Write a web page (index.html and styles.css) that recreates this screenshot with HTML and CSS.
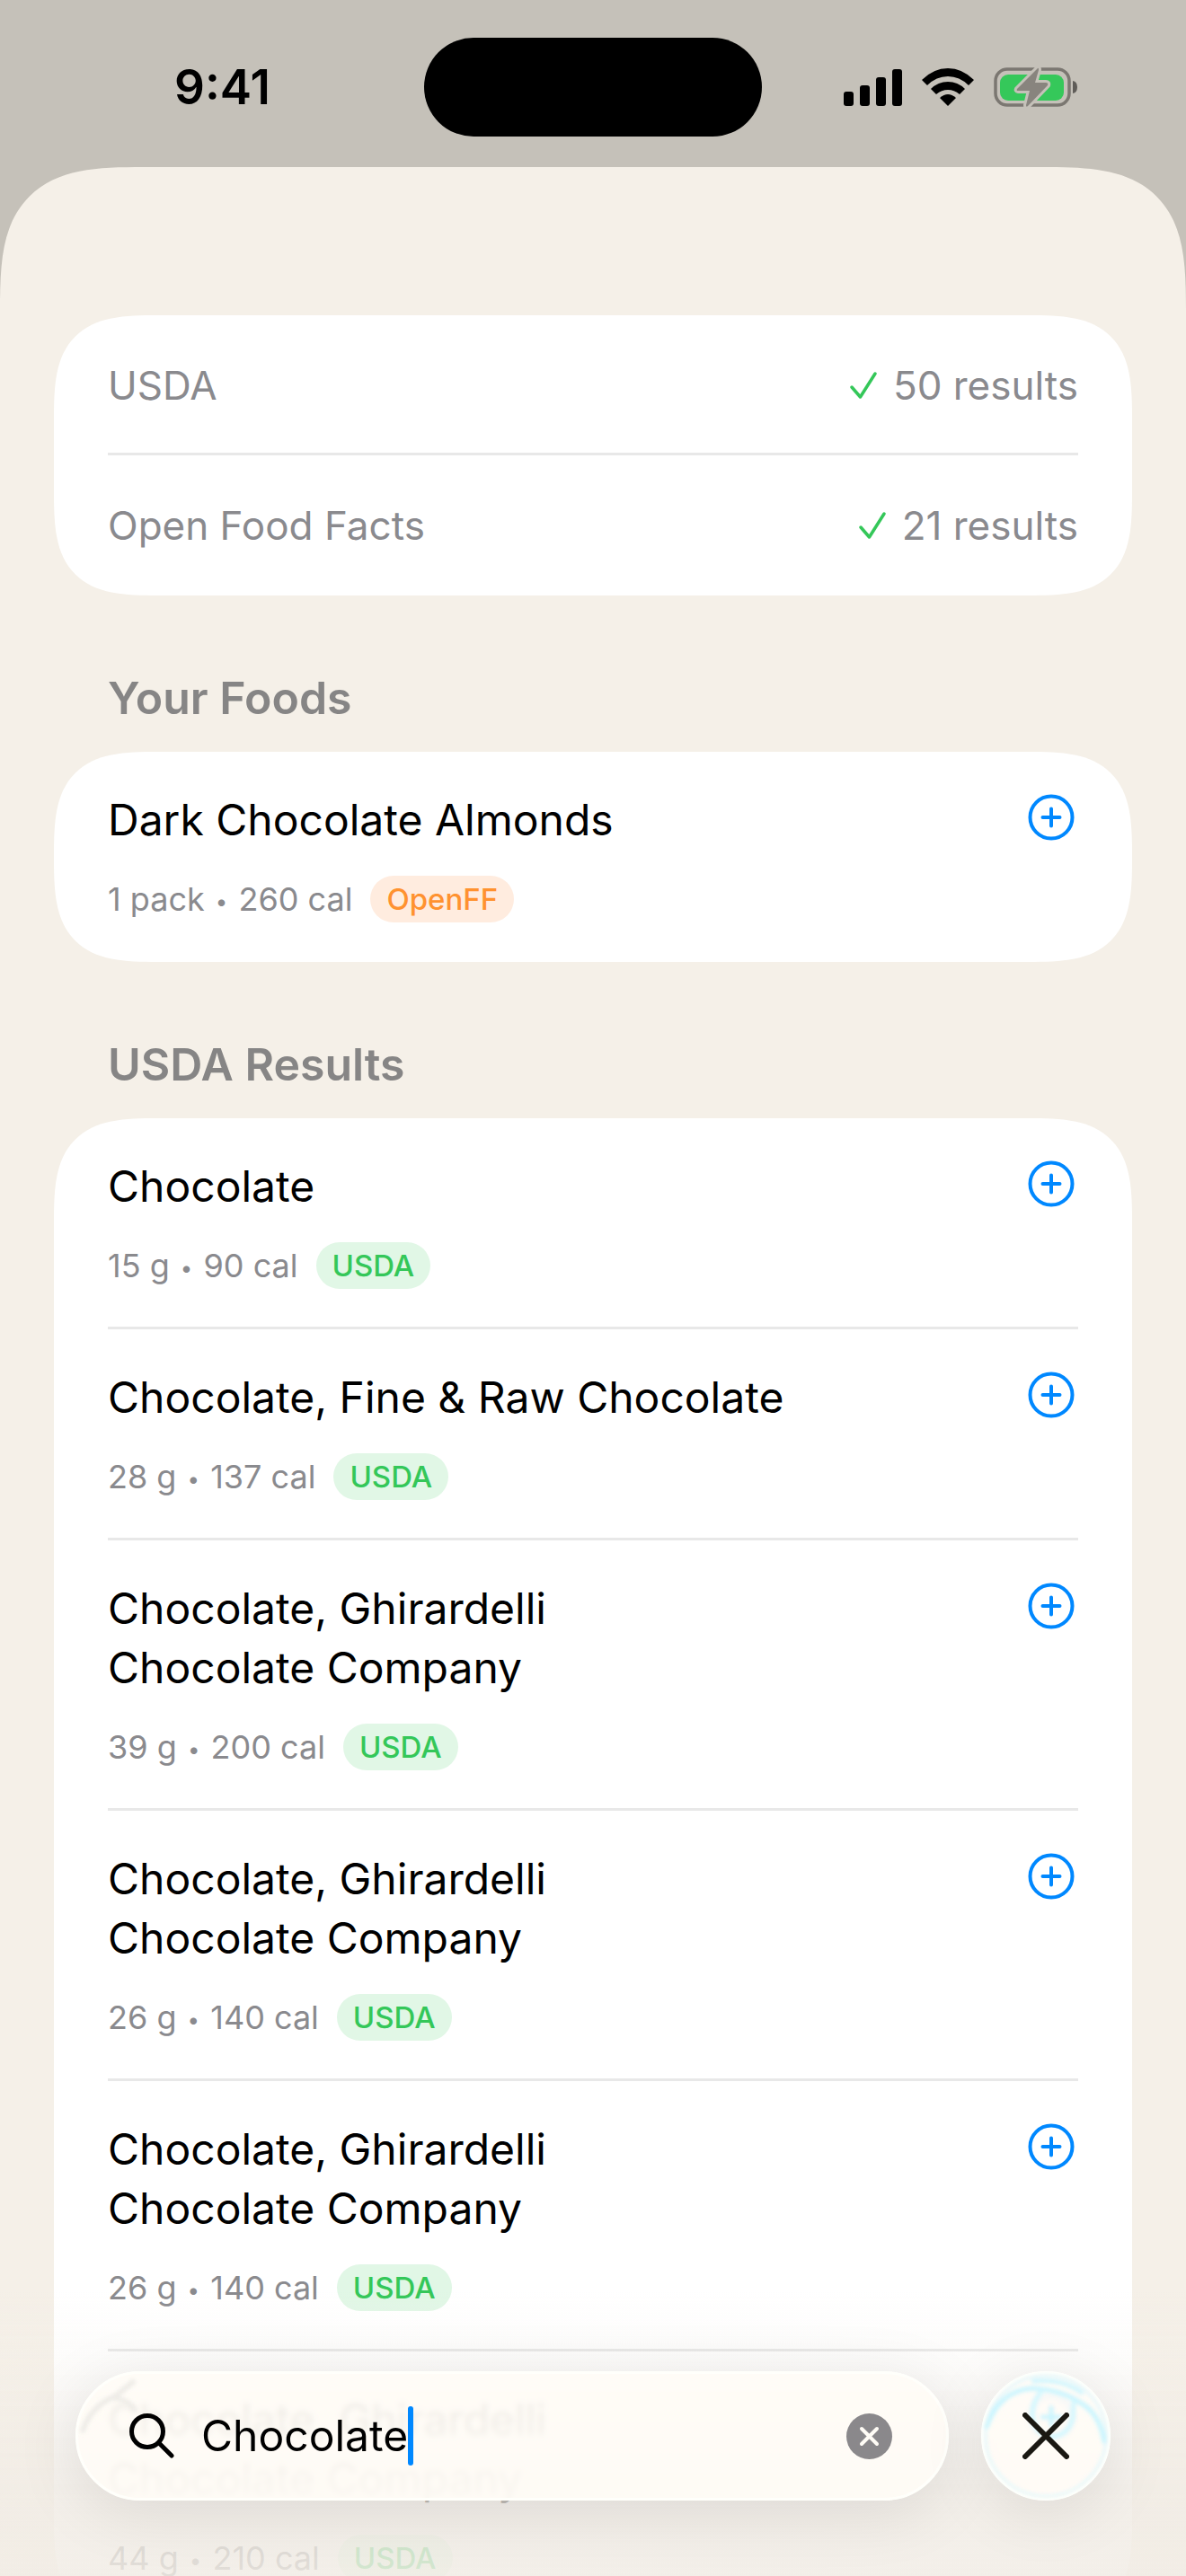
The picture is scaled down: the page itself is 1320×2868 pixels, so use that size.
FILE: index.html
```html
<!DOCTYPE html>
<html lang="en">
<head>
    <meta charset="UTF-8">
    <meta name="viewport" content="width=device-width, initial-scale=1.0">
    <title>Food search</title>
    <link rel="stylesheet" href="styles.css">
</head>
<body>
    <svg width="0" height="0" class="defs" aria-hidden="true">
        <symbol id="plus" viewBox="0 0 60 60">
            <circle cx="30" cy="30" r="23.5" fill="none" stroke="currentColor" stroke-width="4"/>
            <path d="M30 20.500V39.500M20.500 30H39.500" stroke="currentColor" stroke-width="4" stroke-linecap="round"/>
        </symbol>
        <symbol id="check" viewBox="0 0 30 30">
            <path d="M2 17L11.500 28L28 2" fill="none" stroke="currentColor" stroke-width="3.500" stroke-linecap="round" stroke-linejoin="round"/>
        </symbol>
    </svg>

    <header class="status">
        <span class="time">9:41</span>
        <span class="island"></span>
        <div class="signals">
            <svg width="65" height="42" viewBox="0 0 65 42">
                <rect x="0" y="26" width="11" height="16" rx="3"/>
                <rect x="18" y="19" width="11" height="23" rx="3"/>
                <rect x="36" y="10" width="11" height="32" rx="3"/>
                <rect x="54" y="1" width="11" height="41" rx="3"/>
            </svg>
            <svg width="58" height="42" viewBox="0 0 58 42">
                <path d="M29 42L20 33Q29 25 38 33Z"/>
                <path d="M29 0Q45 0 58 13L52 19Q42 9 29 9Q16 9 6 19L0 13Q13 0 29 0Z"/>
                <path d="M29 15Q40 15 48 23L42 29Q36 24 29 24Q22 24 16 29L10 23Q18 15 29 15Z"/>
            </svg>
            <svg width="94" height="46" viewBox="0 0 94 46">
                <rect x="2" y="3" width="82" height="40" rx="13" fill="none" stroke="#7b7771" stroke-width="3.500"/>
                <path d="M88 16Q93 17 93 23Q93 29 88 30Z" fill="#5f5c58"/>
                <rect x="7" y="9" width="71" height="29" rx="9" fill="#35c85a"/>
                <path d="M49 2L26 25Q25 27 27 27L40 27L36 43Q36 46 38 44L60 21Q61 18 58 18L46 18L50 4Q50 1 49 2Z" fill="#88847e" stroke="#c5c1b9" stroke-width="6" paint-order="stroke" stroke-linejoin="round"/>
            </svg>
        </div>
    </header>

    <main class="sheet">
        <ul class="card">
            <li class="source">USDA <span class="count"><svg class="check"><use href="#check"/></svg>50 results</span></li>
            <li class="source">Open Food Facts <span class="count"><svg class="check"><use href="#check"/></svg>21 results</span></li>
        </ul>

        <h2 class="heading">Your Foods</h2>
        <ul class="card">
            <li class="food">
                <div class="info">
                    <div class="name">Dark Chocolate Almonds</div>
                    <div class="meta"><span>1 pack <i class="dot">•</i> 260 cal</span> <span class="badge openff">OpenFF</span></div>
                </div>
                <button class="add" aria-label="Add"><svg><use href="#plus"/></svg></button>
            </li>
        </ul>

        <h2 class="heading">USDA Results</h2>
        <ul class="card">
            <li class="food">
                <div class="info">
                    <div class="name">Chocolate</div>
                    <div class="meta"><span>15 g <i class="dot">•</i> 90 cal</span> <span class="badge">USDA</span></div>
                </div>
                <button class="add" aria-label="Add"><svg><use href="#plus"/></svg></button>
            </li>
            <li class="food">
                <div class="info">
                    <div class="name">Chocolate, Fine &amp; Raw Chocolate</div>
                    <div class="meta"><span>28 g <i class="dot">•</i> 137 cal</span> <span class="badge">USDA</span></div>
                </div>
                <button class="add" aria-label="Add"><svg><use href="#plus"/></svg></button>
            </li>
            <li class="food">
                <div class="info">
                    <div class="name">Chocolate, Ghirardelli<br>Chocolate Company</div>
                    <div class="meta"><span>39 g <i class="dot">•</i> 200 cal</span> <span class="badge">USDA</span></div>
                </div>
                <button class="add" aria-label="Add"><svg><use href="#plus"/></svg></button>
            </li>
            <li class="food">
                <div class="info">
                    <div class="name">Chocolate, Ghirardelli<br>Chocolate Company</div>
                    <div class="meta"><span>26 g <i class="dot">•</i> 140 cal</span> <span class="badge">USDA</span></div>
                </div>
                <button class="add" aria-label="Add"><svg><use href="#plus"/></svg></button>
            </li>
            <li class="food">
                <div class="info">
                    <div class="name">Chocolate, Ghirardelli<br>Chocolate Company</div>
                    <div class="meta"><span>26 g <i class="dot">•</i> 140 cal</span> <span class="badge">USDA</span></div>
                </div>
                <button class="add" aria-label="Add"><svg><use href="#plus"/></svg></button>
            </li>
            <li class="food">
                <div class="info">
                    <div class="name">Chocolate, Ghirardelli<br>Chocolate Company</div>
                    <div class="meta"><span>44 g <i class="dot">•</i> 210 cal</span> <span class="badge">USDA</span></div>
                </div>
                <button class="add" aria-label="Add"><svg><use href="#plus"/></svg></button>
            </li>
        </ul>
    </main>

    <form class="bottom">
        <div class="search">
            <svg class="shine" viewBox="0 0 144 144" aria-hidden="true">
                <path d="M8 66Q18 38 44 28Q54 20 64 12" stroke="#eeece7" stroke-width="6"/>
                <path d="M42 30Q56 30 66 42" stroke="#eeece7" stroke-width="5"/>
            </svg>
            <svg class="glass" viewBox="0 0 50 50"><circle cx="20" cy="20" r="17.500"/><path d="M33 33L47 47"/></svg>
            <input class="field" type="text" value="Chocolate" aria-label="Search foods">
            <span class="caret"></span>
            <button class="clear" type="button" aria-label="Clear text">
                <svg viewBox="0 0 51 51"><path d="M17 17L34 34M34 17L17 34"/></svg>
            </button>
        </div>
        <button class="close" type="button" aria-label="Close search">
            <svg class="shine" viewBox="0 0 144 144" aria-hidden="true">
                <circle cx="72" cy="72" r="67" stroke="#d6f5ff" stroke-width="2"/>
                <path d="M6 62Q20 22 56 19Q88 20 112 36Q132 48 137 78" stroke="#c8f5ff" stroke-width="5"/>
                <path d="M58 11Q90 8 112 24" stroke="#c8f5ff" stroke-width="4"/>
                <path d="M68 22Q56 34 57 52Q62 72 80 73Q98 70 102 52L103 34" stroke="#d2f7ff" stroke-width="5"/>
                <path d="M78 40V60M68 51H88" stroke="#c8f5ff" stroke-width="4"/>
            </svg>
            <svg class="cross" viewBox="0 0 52 52"><path d="M3 3L49 49M49 3L3 49"/></svg>
        </button>
    </form>
</body>
</html>
```

FILE: styles.css
```css
*{
    box-sizing: border-box;
}
body{
    margin: 0;
    height: 100vh;
    overflow: hidden;
    display: flex;
    flex-direction: column;
    background: #c5c1b9;
    font-family: Inter, "Liberation Sans", sans-serif;
    color: #000000;
}
ul{
    margin: 0;
    padding: 0;
    list-style: none;
}
button{
    padding: 0;
    border: 0;
    background: none;
    cursor: pointer;
}
svg{
    display: block;
}
.defs{
    position: absolute;
}

/* status bar */
.status{
    flex: none;
    height: 186px;
    padding: 42px 120px 34px 120px;
    display: grid;
    grid-template-columns: 1fr 376px 1fr;
    align-items: center;
}
.time{
    padding-left: 74px;
    font-size: 53px;
    line-height: 60px;
    font-weight: 600;
}
.island{
    height: 110px;
    border-radius: 55px;
    background: #000000;
}
.signals{
    display: flex;
    justify-content: flex-end;
    align-items: center;
    gap: 22px;
}

/* sheet */
.sheet{
    flex: 1;
    min-height: 0;
    overflow: hidden;
    padding: 165px 60px 0 60px;
    background: #f5f0e8;
    border-radius: 115px 115px 0 0;
}
.card{
    padding: 0 60px;
    background: #ffffff;
    border-radius: 78px;
}
@supports (corner-shape: superellipse(2)){
    .sheet{
        border-radius: 160px 160px 0 0;
        corner-shape: superellipse(1.6);
    }
    .card{
        border-radius: 116px;
        corner-shape: superellipse(1.6);
    }
}
.source{
    display: flex;
    justify-content: space-between;
    padding: 48px 0 45px 0;
    border-bottom: 3px solid #e8e8e8;
    font-size: 44px;
    line-height: 60px;
    color: #8a8a8e;
}
.source:last-child{
    border-color: transparent;
}
.count{
    display: flex;
    align-items: center;
    gap: 18px;
}
.check{
    width: 30px;
    height: 30px;
    color: #34c759;
}
.heading{
    margin: 84px 60px 30px 60px;
    font-size: 50px;
    line-height: 60px;
    font-weight: 600;
    color: #868585;
}
.food{
    display: flex;
    justify-content: space-between;
    align-items: flex-start;
    padding: 43px 0 42px 0;
    border-bottom: 3px solid #e8e8e8;
}
.food:last-child{
    padding-bottom: 44px;
    border-bottom: 0;
}
.name{
    font-size: 48px;
    line-height: 66px;
}
.meta{
    display: flex;
    align-items: center;
    gap: 20px;
    margin-top: 29px;
    font-size: 36px;
    line-height: 52px;
    color: #8a8a8e;
}
.dot{
    padding: 0 2px;
    font-size: 24px;
    font-style: normal;
    line-height: 24px;
    vertical-align: middle;
}
.badge{
    padding: 0 18px;
    border-radius: 26px;
    background: #e1f7e6;
    font-size: 33px;
    font-weight: 500;
    color: #34c759;
}
.openff{
    background: #ffecdf;
    color: #ff9230;
}
.add{
    color: #0088ff;
}
.add svg{
    width: 60px;
    height: 60px;
}

/* search bar floating over the list */
.bottom{
    position: fixed;
    left: 0;
    right: 0;
    bottom: 0;
    display: flex;
    gap: 36px;
    padding: 90px 84px 84px 84px;
    background: linear-gradient(rgba(243,238,231,0) 0%, rgba(243,238,231,.2) 26%, rgba(241,236,229,.78) 70%, rgba(241,236,229,.85) 100%);
}
.search, .close{
    position: relative;
    height: 144px;
    border: 3px solid #fffffb;
    border-radius: 72px;
    background: rgba(255,252,246,.9);
    backdrop-filter: blur(3px);
    box-shadow: 0 12px 72px rgba(0,0,0,.1);
}
.search{
    flex: 1;
    display: flex;
    align-items: center;
    padding: 0 60px 0 57px;
}
.shine{
    position: absolute;
    top: -3px;
    left: -3px;
    width: 144px;
    height: 144px;
    fill: none;
    stroke-linecap: round;
    filter: blur(2px);
}
.glass{
    position: relative;
    width: 50px;
    height: 50px;
    margin-right: 30px;
    fill: none;
    stroke: #000000;
    stroke-width: 5;
    stroke-linecap: round;
}
.field{
    field-sizing: content;
    padding: 0;
    border: 0;
    outline: 0;
    background: none;
    font: inherit;
    font-size: 48px;
    line-height: 66px;
    color: #000000;
}
.caret{
    width: 6px;
    height: 66px;
    border-radius: 3px;
    background: #0088ff;
}
.clear{
    width: 51px;
    height: 51px;
    margin-left: auto;
    border-radius: 50%;
    background: #8a888b;
}
.clear svg{
    fill: none;
    stroke: #fffcf6;
    stroke-width: 4;
    stroke-linecap: round;
}
.close{
    width: 144px;
    display: flex;
    align-items: center;
    justify-content: center;
    background: rgba(255,252,246,.92);
}
.cross{
    position: relative;
    width: 52px;
    height: 52px;
    fill: none;
    stroke: #1a1812;
    stroke-width: 6;
    stroke-linecap: round;
}
```
